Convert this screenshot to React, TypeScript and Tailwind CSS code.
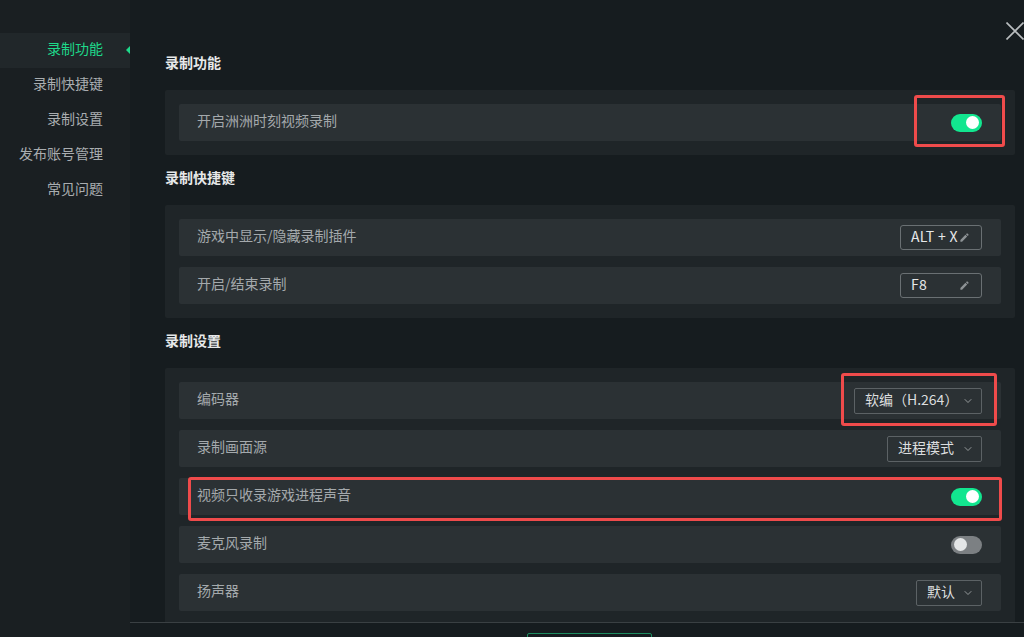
import { ChevronDown } from "lucide-react";
import { MdEdit } from "react-icons/md";

const font = { fontFamily: '"Noto Sans CJK SC", "Noto Sans", sans-serif' };

function Toggle({ on }: { on: boolean }) {
  return on ? (
    <div className="w-[31px] h-[18px] rounded-full bg-[#12e68f] flex items-center justify-end pr-[3px]">
      <div className="w-[13px] h-[13px] rounded-full bg-white" />
    </div>
  ) : (
    <div className="w-[31px] h-[18px] rounded-full bg-[#7c8083] flex items-center pl-[3px]">
      <div className="w-[13px] h-[13px] rounded-full bg-[#e4e6e7]" />
    </div>
  );
}

function KeyBox({ value }: { value: string }) {
  return (
    <div className="w-[82px] h-[25px] border border-[#6a7073] rounded-[3px] flex items-center justify-between pl-[10px] pr-[11px] text-[14px] text-[#e6e8e9]">
      <span className="mb-[2px] tracking-[0.3px]">{value}</span>
      <MdEdit size={11} className="text-[#8d9295]" />
    </div>
  );
}

function Select({ value, width }: { value: string; width: string }) {
  return (
    <div className={`${width} h-[26px] border border-[#5c6265] rounded-[2px] flex items-center justify-between pl-[10px] pr-[7px] text-[14px] text-[#dcdedf]`}>
      <span className="mb-[2px]">{value}</span>
      <ChevronDown size={12} strokeWidth={1.6} className="text-[#aeb2b4]" />
    </div>
  );
}

function Row({ label, children, mark }: { label: string; children: React.ReactNode; mark?: React.ReactNode }) {
  return (
    <div className="relative h-[37px] bg-[#2b3134] rounded-[2px] pl-[18px] pr-[19px] flex items-center justify-between">
      <span className="text-[14px] text-[#a4a9ac] mb-[4px]">{label}</span>
      {children}
      {mark}
    </div>
  );
}

function Section({ title, children, first }: { title: string; children: React.ReactNode; first?: boolean }) {
  return (
    <div className={first ? "" : "mt-[15px]"}>
      <div className="h-[20px] leading-[15px] text-[14px] font-bold text-[#e6e8e9]">{title}</div>
      <div className="mt-[15px] bg-[#1f2528] rounded-[2px] p-[14px] flex flex-col gap-[11px]">{children}</div>
    </div>
  );
}

const redBox = "absolute border-[3px] border-[#ef4b4b] rounded-[3px] pointer-events-none";

export default function App() {
  const nav = ["录制功能", "录制快捷键", "录制设置", "发布账号管理", "常见问题"];
  return (
    <div className="relative w-[1024px] h-[637px] flex bg-[#161c1f] overflow-hidden" style={font}>
      <aside className="w-[130px] shrink-0 bg-[#1a1f22] pt-[33px]">
        {nav.map((n, i) => (
          <div
            key={n}
            className={`relative h-[35px] flex items-center justify-end pr-[27px] pb-[4px] text-[14px] ${i === 0 ? "bg-[#21272a] text-[#1ed98a]" : "text-[#a9adb0]"}`}
          >
            {n}
            {i === 0 && (
              <span className="absolute right-0 top-[13px] w-0 h-0 border-y-[4px] border-y-transparent border-r-[4px] border-r-[#1ed98a]" />
            )}
          </div>
        ))}
      </aside>

      <main className="flex-1 flex flex-col min-w-0">
        <div className="h-[622px] shrink-0 overflow-hidden pl-[35px] pr-[9px] pt-[55px]">
          <Section title="录制功能" first>
            <Row
              label="开启洲洲时刻视频录制"
              mark={<div className={`${redBox} right-[-4px] top-[-9px] w-[91px] h-[52px]`} />}
            >
              <Toggle on />
            </Row>
          </Section>

          <Section title="录制快捷键">
            <Row label="游戏中显示/隐藏录制插件">
              <KeyBox value="ALT + X" />
            </Row>
            <Row label="开启/结束录制">
              <KeyBox value="F8" />
            </Row>
          </Section>

          <Section title="录制设置">
            <Row
              label="编码器"
              mark={<div className={`${redBox} right-[4px] top-[-9px] w-[156px] h-[53px]`} />}
            >
              <Select value="软编（H.264）" width="w-[128px]" />
            </Row>
            <Row label="录制画面源">
              <Select value="进程模式" width="w-[95px]" />
            </Row>
            <Row
              label="视频只收录游戏进程声音"
              mark={<div className={`${redBox} left-[9px] right-[-1px] top-[-1px] h-[44px]`} />}
            >
              <Toggle on />
            </Row>
            <Row label="麦克风录制">
              <Toggle on={false} />
            </Row>
            <Row label="扬声器">
              <Select value="默认" width="w-[66px]" />
            </Row>
          </Section>
        </div>
        <div className="flex-1 overflow-hidden border-t border-[#3a4043] pt-[10px] pl-[397px]">
          <div className="w-[125px] h-[30px] border border-[#1d8c60] rounded-[2px] bg-[#161c1f]" />
        </div>
      </main>

      <svg className="absolute left-[1006px] top-[22px]" width="18" height="18" viewBox="0 0 18 18">
        <path d="M0.5 0.5 L17.5 17.5 M17.5 0.5 L0.5 17.5" stroke="#b9bdbf" strokeWidth="1.6" fill="none" />
      </svg>
    </div>
  );
}
